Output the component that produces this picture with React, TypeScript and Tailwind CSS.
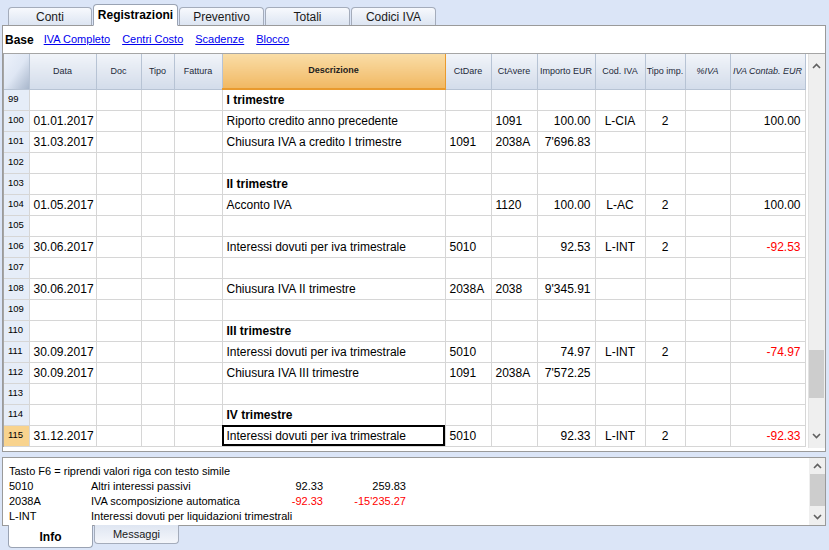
import React from "react";

type Row = {
  n: number;
  data?: string;
  desc?: string;
  bold?: boolean;
  dare?: string;
  avere?: string;
  imp?: string;
  cod?: string;
  tipo?: string;
  iva?: string;
  neg?: boolean;
};

const rows: Row[] = [
  { n: 99, desc: "I trimestre", bold: true },
  { n: 100, data: "01.01.2017", desc: "Riporto credito anno precedente", avere: "1091", imp: "100.00", cod: "L-CIA", tipo: "2", iva: "100.00" },
  { n: 101, data: "31.03.2017", desc: "Chiusura IVA a credito I trimestre", dare: "1091", avere: "2038A", imp: "7'696.83" },
  { n: 102 },
  { n: 103, desc: "II trimestre", bold: true },
  { n: 104, data: "01.05.2017", desc: "Acconto IVA", avere: "1120", imp: "100.00", cod: "L-AC", tipo: "2", iva: "100.00" },
  { n: 105 },
  { n: 106, data: "30.06.2017", desc: "Interessi dovuti per iva trimestrale", dare: "5010", imp: "92.53", cod: "L-INT", tipo: "2", iva: "-92.53", neg: true },
  { n: 107 },
  { n: 108, data: "30.06.2017", desc: "Chiusura IVA II trimestre", dare: "2038A", avere: "2038", imp: "9'345.91" },
  { n: 109 },
  { n: 110, desc: "III trimestre", bold: true },
  { n: 111, data: "30.09.2017", desc: "Interessi dovuti per iva trimestrale", dare: "5010", imp: "74.97", cod: "L-INT", tipo: "2", iva: "-74.97", neg: true },
  { n: 112, data: "30.09.2017", desc: "Chiusura IVA III trimestre", dare: "1091", avere: "2038A", imp: "7'572.25" },
  { n: 113 },
  { n: 114, desc: "IV trimestre", bold: true },
  { n: 115, data: "31.12.2017", desc: "Interessi dovuti per iva trimestrale", dare: "5010", imp: "92.33", cod: "L-INT", tipo: "2", iva: "-92.33", neg: true },
];

function Chevron({ up }: { up?: boolean }) {
  return (
    <svg width="9" height="6" viewBox="0 0 9 6" className="block">
      <path d={up ? "M1 5 L4.5 1.5 L8 5" : "M1 1 L4.5 4.5 L8 1"} fill="none" stroke="#606060" strokeWidth="1.6" />
    </svg>
  );
}

function TopTab({ label, active, w = 85 }: { label: string; active?: boolean; w?: number }) {
  if (active)
    return (
      <div style={{ width: w }} className="h-[22px] -mb-px z-10 bg-white border border-[#9aa3b3] border-b-white rounded-t-[4px] flex items-center justify-center text-[12px] font-bold text-black">
        {label}
      </div>
    );
  return (
    <div style={{ width: w }} className="h-[18px] bg-gradient-to-b from-[#f7f9fd] to-[#dde5f2] border border-[#a4acbb] border-b-0 rounded-t-[4px] flex items-center justify-center text-[12px] text-[#1a1a1a]">
      {label}
    </div>
  );
}

export default function App() {
  const head = "bg-gradient-to-b from-[#f1f4f9] to-[#d3dcea] border-r border-b border-[#b7c3d4] text-[9px] text-[#1e2a3a] text-center align-middle font-normal whitespace-nowrap overflow-hidden";
  const cell = "border-r border-b border-[#d6d6d6] h-[21px] px-[4px] whitespace-nowrap overflow-hidden";
  return (
    <div className="w-[829px] h-[550px] bg-[#dbe5f7] relative overflow-hidden" style={{ fontFamily: "'Liberation Sans', Arial, sans-serif" }}>
      {/* top tabs */}
      <div className="flex items-end pl-[8px] h-[25px] gap-px">
        <TopTab label="Conti" w={84} />
        <TopTab label="Registrazioni" active />
        <TopTab label="Preventivo" />
        <TopTab label="Totali" />
        <TopTab label="Codici IVA" />
      </div>

      {/* main panel */}
      <div className="ml-[2px] w-[824px] h-[427px] bg-white border border-[#9a9a9a] flex flex-col">
        <div className="h-[27px] flex items-center gap-[12px] pl-[2px] text-[11px]">
          <span className="font-bold text-black text-[12px] -mr-[2px]">Base</span>
          <span className="text-[#0000ee] underline">IVA Completo</span>
          <span className="text-[#0000ee] underline">Centri Costo</span>
          <span className="text-[#0000ee] underline">Scadenze</span>
          <span className="text-[#0000ee] underline">Blocco</span>
        </div>
        <div className="flex border-t border-l border-[#a5a5a5] h-[394px]">
          <table className="table-fixed border-collapse w-[801px] text-[12px] text-black self-start">
            <colgroup>
              {[25, 67, 45, 33, 48, 223, 46, 46, 58, 50, 40, 45, 75].map((w, i) => (
                <col key={i} style={{ width: w }} />
              ))}
            </colgroup>
            <thead>
              <tr className="h-[35px]">
                <th className="bg-gradient-to-br from-[#edf2fb] via-[#dfe7f4] to-[#a9b7cc] border-r border-b border-[#b7c3d4]"></th>
                <th className={head}>Data</th>
                <th className={head}>Doc</th>
                <th className={head}>Tipo</th>
                <th className={head}>Fattura</th>
                <th className="bg-gradient-to-b from-[#f9dda6] to-[#f1b862] border-r border-b-2 border-[#e99a2e] text-[9px] font-bold text-[#1e1e1e]">Descrizione</th>
                <th className={head}>CtDare</th>
                <th className={head}>CtAvere</th>
                <th className={head}>Importo EUR</th>
                <th className={head}>Cod. IVA</th>
                <th className={head}>Tipo imp.</th>
                <th className={head + " italic"}>%IVA</th>
                <th className={head + " italic"}>IVA Contab. EUR</th>
              </tr>
            </thead>
            <tbody>
              {rows.map((r) => {
                const sel = r.n === 115;
                return (
                  <tr key={r.n}>
                    <td className={`border-r border-b border-[#d6d6d6] h-[21px] text-[9.5px] pl-[4px] ${sel ? "bg-[#f8d38e]" : "bg-[#e6edf8]"}`}>{r.n}</td>
                    <td className={cell}>{r.data}</td>
                    <td className={cell}></td>
                    <td className={cell}></td>
                    <td className={cell}></td>
                    <td className={`${cell} ${r.bold ? "font-bold" : ""} ${sel ? "outline-2 outline-black -outline-offset-2" : ""}`}>{r.desc}</td>
                    <td className={cell}>{r.dare}</td>
                    <td className={cell}>{r.avere}</td>
                    <td className={cell + " text-right"}>{r.imp}</td>
                    <td className={cell + " text-center"}>{r.cod}</td>
                    <td className={cell + " text-center"}>{r.tipo}</td>
                    <td className={cell}></td>
                    <td className={`${cell} text-right ${r.neg ? "text-[#ff0000]" : ""}`}>{r.iva}</td>
                  </tr>
                );
              })}
            </tbody>
          </table>
          {/* scrollbar */}
          <div className="ml-[2px] w-[17px] h-[394px] bg-[#efefef] flex flex-col items-center border-l border-[#e2e2e2]">
            <div className="h-[20px] flex items-center justify-center mt-[2px]"><Chevron up /></div>
            <div className="flex-1"></div>
            <div className="w-[15px] h-[48px] bg-[#cdcdcd]"></div>
            <div className="h-[30px]"></div>
            <div className="h-[16px] flex items-center justify-center mb-[4px]"><Chevron /></div>
          </div>
        </div>
      </div>

      {/* info panel */}
      <div className="ml-[2px] mt-[5px] w-[824px] h-[69px] bg-white border border-[#9a9a9a] flex">
        <div className="flex-1 pl-[6px] pt-[6px] leading-[15px] text-[11px] text-black">
          <div>Tasto F6 = riprendi valori riga con testo simile</div>
          <div className="flex whitespace-nowrap">
            <span className="w-[82px]">5010</span>
            <span className="w-[150px]">Altri interessi passivi</span>
            <span className="w-[82px] text-right">92.33</span>
            <span className="w-[83px] text-right">259.83</span>
          </div>
          <div className="flex whitespace-nowrap">
            <span className="w-[82px]">2038A</span>
            <span className="w-[150px]">IVA scomposizione automatica</span>
            <span className="w-[82px] text-right text-[#ff0000]">-92.33</span>
            <span className="w-[83px] text-right text-[#ff0000]">-15'235.27</span>
          </div>
          <div className="flex whitespace-nowrap">
            <span className="w-[82px]">L-INT</span>
            <span>Interessi dovuti per liquidazioni trimestrali</span>
          </div>
        </div>
        <div className="w-[16px] bg-[#efefef] flex flex-col items-center">
          <div className="h-[16px] flex items-center justify-center"><Chevron up /></div>
          <div className="w-[15px] h-[32px] bg-[#cdcdcd]"></div>
          <div className="flex-1"></div>
          <div className="h-[16px] flex items-center justify-center"><Chevron /></div>
        </div>
      </div>

      {/* bottom tabs */}
      <div className="flex items-start pl-[8px] gap-px -mt-px">
        <div className="w-[85px] h-[23px] pt-[2px] bg-white border border-[#9aa3b3] border-t-0 rounded-b-[4px] flex items-center justify-center text-[12px] font-bold text-black z-10">Info</div>
        <div className="w-[85px] h-[19px] bg-gradient-to-t from-[#f4f6fb] to-[#dfe6f2] border border-[#a4acbb] border-t-0 rounded-b-[4px] flex items-center justify-center text-[11px] text-[#1a1a1a]">Messaggi</div>
      </div>
    </div>
  );
}
